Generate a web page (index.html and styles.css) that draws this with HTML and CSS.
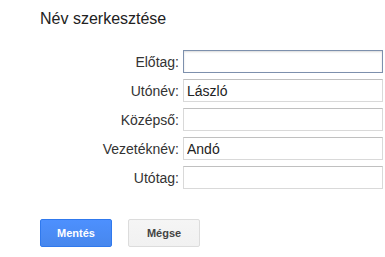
FILE: index.html
```html
<!DOCTYPE html>
<html lang="hu">

<head>
    <meta charset="UTF-8">
    <title>Név szerkesztése</title>
    <link rel="stylesheet" href="styles.css">
</head>

<body>
    <h1 class="title">Név szerkesztése</h1>
    <form class="name-form">
        <label for="prefix">Előtag:</label>
        <input type="text" id="prefix" class="field focused" value="">
        <label for="given">Utónév:</label>
        <input type="text" id="given" class="field" value="László">
        <label for="middle">Középső:</label>
        <input type="text" id="middle" class="field" value="">
        <label for="family">Vezetéknév:</label>
        <input type="text" id="family" class="field" value="Andó">
        <label for="suffix">Utótag:</label>
        <input type="text" id="suffix" class="field" value="">
    </form>
    <div class="actions">
        <button class="btn btn-primary">Mentés</button>
        <button class="btn">Mégse</button>
    </div>
</body>

</html>
```

FILE: styles.css
```css
body {
    margin: 0;
    background: #fff;
    font-family: Arial, "Liberation Sans", sans-serif;
    color: #222;
}

.title {
    margin: 10px 0 0 40px;
    font-size: 16px;
    font-weight: normal;
    line-height: 18px;
    color: #222;
}

.name-form {
    display: grid;
    grid-template-columns: 139px 200px;
    column-gap: 4px;
    row-gap: 6px;
    align-items: center;
    margin: 22px 0 0 40px;
}

.name-form label {
    text-align: right;
    font-size: 14px;
    color: #333;
}

.field {
    box-sizing: border-box;
    height: 23px;
    width: 200px;
    margin: 0;
    padding: 0 3px;
    border: 1px solid #d9d9d9;
    border-top-color: #c0c0c0;
    border-radius: 0;
    font-family: Arial, "Liberation Sans", sans-serif;
    font-size: 14px;
    color: #222;
    outline: none;
}

.field.focused {
    border-color: #7d90ad;
    box-shadow: inset 0 1px 2px rgba(0, 0, 0, 0.15);
}

.actions {
    display: flex;
    gap: 16px;
    margin: 30px 0 0 40px;
}

.btn {
    box-sizing: border-box;
    width: 72px;
    height: 28px;
    padding: 0 8px;
    border: 1px solid #dcdcdc;
    border-radius: 2px;
    background: linear-gradient(#f5f5f5, #f1f1f1);
    font-family: Arial, "Liberation Sans", sans-serif;
    font-size: 11px;
    font-weight: bold;
    color: #444;
    cursor: pointer;
}

.btn-primary {
    border-color: #3079ed;
    background: linear-gradient(#4d90fe, #4787ed);
    color: #fff;
}
```
